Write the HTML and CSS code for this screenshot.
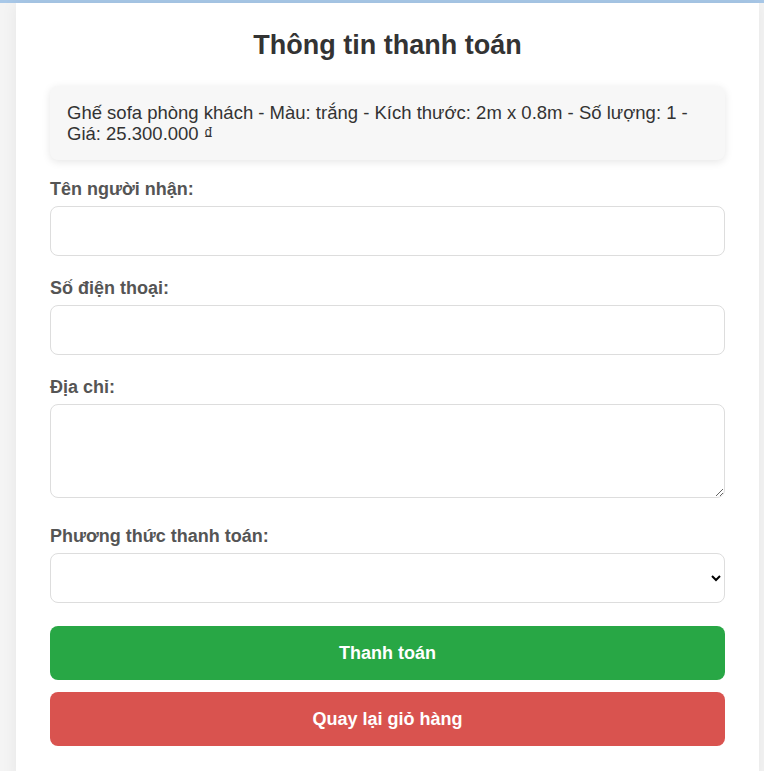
FILE: index.html
```html
<!DOCTYPE html>
<html lang="vi">
<head>
<meta charset="UTF-8">
<title>Thông tin thanh toán</title>
<link rel="stylesheet" href="styles.css">
</head>
<body>
<div class="topbar"></div>
<div class="page">
  <div class="container">
    <h2 class="title">Thông tin thanh toán</h2>
    <div class="summary">Ghế sofa phòng khách - Màu: trắng - Kích thước: 2m x 0.8m - Số lượng: 1 - Giá: 25.300.000 ₫</div>
    <form class="form">
      <label class="label" for="name">Tên người nhận:</label>
      <input class="field" id="name" type="text">
      <label class="label" for="phone">Số điện thoại:</label>
      <input class="field" id="phone" type="text">
      <label class="label" for="addr">Địa chỉ:</label>
      <textarea class="field area" id="addr"></textarea>
      <label class="label" for="pay">Phương thức thanh toán:</label>
      <select class="field select" id="pay"><option></option></select>
      <button type="button" class="btn btn-pay">Thanh toán</button>
      <button type="button" class="btn btn-back">Quay lại giỏ hàng</button>
    </form>
  </div>
</div>
</body>
</html>
```
FILE: styles.css
```css
* { box-sizing: border-box; }
html, body { margin: 0; padding: 0; }
body {
  font-family: "Liberation Sans", Arial, sans-serif;
  background: #f4f4f4;
  color: #333;
}
.topbar { height: 3px; background: #a8c8e8; }
.page { display: flex; padding-left: 16px; }
.container {
  width: 743px;
  background: #fff;
  padding: 0 34px 24px 34px;
  box-shadow: 0 0 16px rgba(0,0,0,0.06);
}
.title {
  margin: 0;
  padding: 27px 0 26px;
  text-align: center;
  font-size: 27px;
  line-height: 30px;
  color: #333;
  font-weight: bold;
}
.summary {
  background: #f7f7f7;
  border-radius: 8px;
  padding: 16px 17px;
  font-size: 18.5px;
  line-height: 21px;
  color: #333;
  box-shadow: 0 2px 8px rgba(0,0,0,0.1);
  margin-bottom: 19px;
}
.form { display: flex; flex-direction: column; }
.label {
  font-size: 18px;
  line-height: 20px;
  font-weight: bold;
  color: #555;
  margin-bottom: 7px;
}
.field {
  display: block;
  width: 100%;
  height: 50px;
  border: 1px solid #ddd;
  border-radius: 8px;
  padding: 10px;
  font-family: inherit;
  font-size: 16px;
  background: #fff;
  margin: 0 0 22px 0;
}
.area { height: 94px; margin-bottom: 28px; resize: vertical; }
.select { margin-bottom: 23px; }
.btn {
  display: block;
  width: 100%;
  height: 54px;
  border: none;
  border-radius: 8px;
  color: #fff;
  font-family: inherit;
  font-size: 18px;
  font-weight: bold;
  margin: 0 0 12px 0;
}
.btn-pay { background: #28a745; }
.btn-back { background: #d9534f; }
```
